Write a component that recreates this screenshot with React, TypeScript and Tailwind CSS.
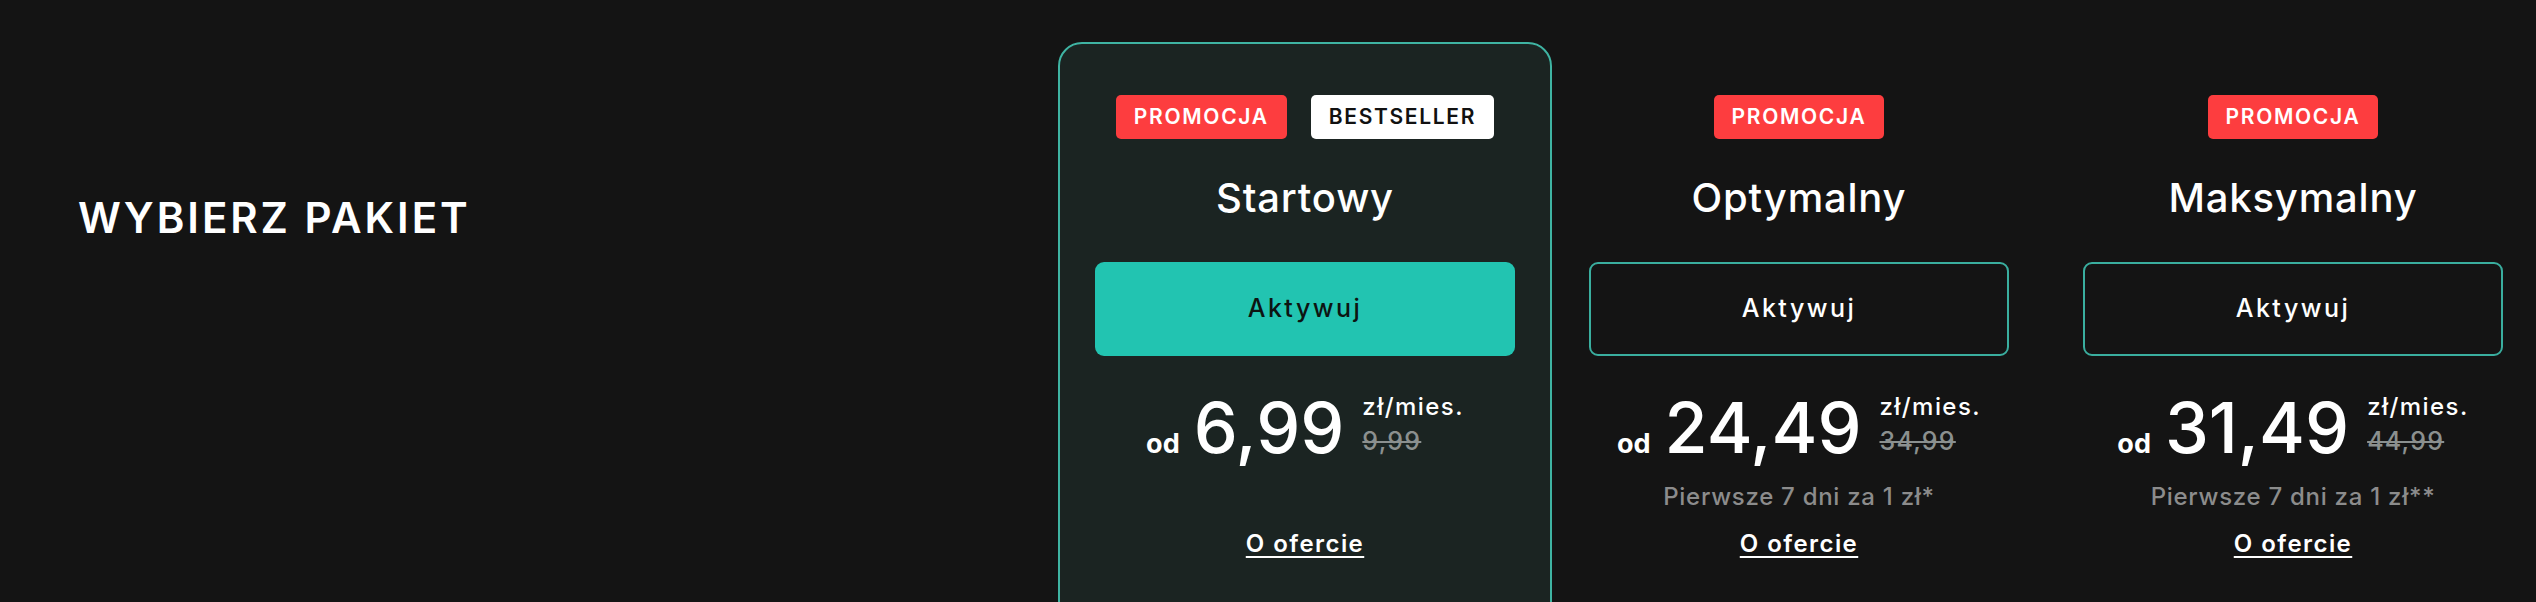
import React from 'react';

const plans = [
  {
    name: "Startowy",
    price: "6,99",
    oldPrice: "9,99",
    note: "",
    highlighted: true,
    bestseller: true,
  },
  {
    name: "Optymalny",
    price: "24,49",
    oldPrice: "34,99",
    note: "Pierwsze 7 dni za 1 zł*",
    highlighted: false,
    bestseller: false,
  },
  {
    name: "Maksymalny",
    price: "31,49",
    oldPrice: "44,99",
    note: "Pierwsze 7 dni za 1 zł**",
    highlighted: false,
    bestseller: false,
  },
];

const PlanCard = ({ plan }: { plan: (typeof plans)[number] }) => {
  return (
    <div
      className={`w-[494px] shrink-0 h-[600px] mt-[42px] rounded-t-[24px] border-2 px-[35px] pt-[51px] flex flex-col items-center ${
        plan.highlighted ? "bg-[#1b2422] border-[#3fb4a3]" : "border-transparent"
      }`}
    >
      <div className="flex gap-[24px] h-[44px]">
        <span className="h-[44px] px-[18px] rounded-[5px] bg-[#fd3d3f] text-white text-[21px] font-semibold tracking-[0.08em] flex items-center">
          PROMOCJA
        </span>
        {plan.bestseller && (
          <span className="h-[44px] px-[18px] rounded-[5px] bg-white text-[#111] text-[21px] font-semibold tracking-[0.08em] flex items-center">
            BESTSELLER
          </span>
        )}
      </div>

      <h3 className="mt-[35px] text-[40px] leading-[48px] font-medium text-white tracking-[0.02em]">
        {plan.name}
      </h3>

      <button
        className={`mt-[40px] w-full h-[94px] rounded-[9px] text-[25px] font-medium tracking-[0.1em] ${
          plan.highlighted
            ? "bg-[#22c4b1] text-[#0d1412]"
            : "border-2 border-[#3aae9f] text-white"
        }`}
      >
        Aktywuj
      </button>

      <div className="mt-[37px] h-[70px] flex items-start justify-center">
        <div className="flex items-baseline gap-[14px]">
          <span className="text-[27px] font-bold text-white">od</span>
          <span className="text-[70px] leading-[70px] font-medium text-white">{plan.price}</span>
        </div>
        <div className="ml-[18px] pt-[2px] flex flex-col">
          <span className="text-[24px] leading-[24px] font-medium text-white tracking-[0.06em]">zł/mies.</span>
          <span className="mt-[10px] text-[25px] leading-[24px] font-medium text-[#8b908f] tracking-[0.05em] line-through decoration-2">
            {plan.oldPrice}
          </span>
        </div>
      </div>

      <div className="mt-[20px] h-[28px] text-[24px] leading-[28px] font-medium text-[#8c8c8c] tracking-[0.03em]">
        {plan.note}
      </div>

      <a className="mt-[19px] text-[24px] leading-[28px] font-semibold text-white underline underline-offset-[4px] decoration-2 tracking-[0.06em]">
        O ofercie
      </a>
    </div>
  );
};

export default function App() {
  return (
    <div className="w-[2536px] h-[602px] bg-[#141414] overflow-hidden flex font-['Inter',sans-serif]">
      <div className="w-[1058px] shrink-0 pl-[78px] pt-[194px]">
        <h2 className="text-[42px] leading-[48px] font-semibold text-white tracking-[0.07em]">
          WYBIERZ PAKIET
        </h2>
      </div>
      {plans.map((plan) => (
        <PlanCard key={plan.name} plan={plan} />
      ))}
    </div>
  );
}
